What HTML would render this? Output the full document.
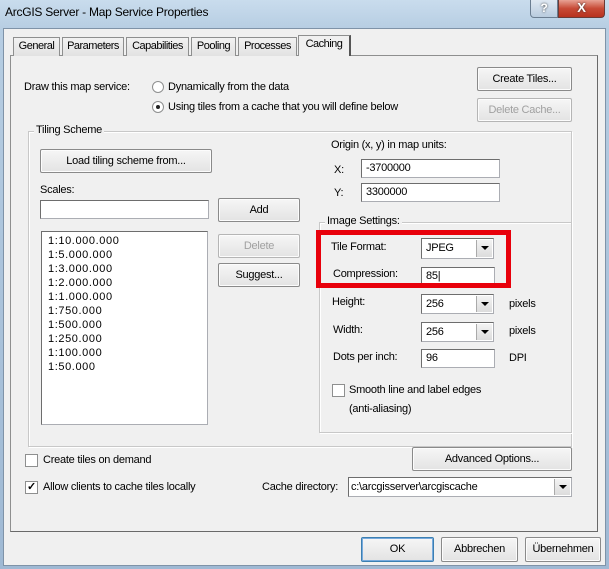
<!DOCTYPE html>
<html><head><meta charset="utf-8"><style>
*{box-sizing:border-box;margin:0;padding:0}
body{width:609px;height:569px;overflow:hidden;position:relative;font-family:"Liberation Sans",sans-serif;font-size:11px;letter-spacing:-0.25px;color:#000;background:linear-gradient(180deg,#c9dced 0,#b6cde2 30px,#9fb9d4 100%)}
.a{position:absolute;white-space:nowrap}
.t{position:absolute;white-space:nowrap;line-height:13px}
.btn{position:absolute;background:linear-gradient(#f6f6f6,#e3e3e3);border:1px solid #8a8a8a;border-radius:2px;text-align:center;box-shadow:inset 0 0 0 1px #fcfcfc}
.dis{color:#a0a0a0;border-color:#b5b5b5}
.inp{position:absolute;background:#fff;border:1px solid #abadb3;border-top-color:#6d6d6d;border-left-color:#6d6d6d;padding-left:4px}
.grp{position:absolute;border:1px solid #c8c8c8;box-shadow:1px 1px 0 #fff, inset 1px 1px 0 #fff}
.gl{position:absolute;background:#f0f0f0;padding:0 2px;top:-8px;left:5px;white-space:nowrap}
.cb{position:absolute;width:13px;height:13px;background:#fff;border:1px solid #8e8f8f}
.dd{position:absolute;right:1px;top:1px;bottom:1px;width:16px;background:linear-gradient(#f3f3f3,#dcdcdc);border-left:1px solid #aaa}
.dd:after{content:"";position:absolute;left:4px;top:6px;border:4px solid transparent;border-top:4px solid #000;border-bottom:0}
.tab{position:absolute;top:37px;height:19px;border:1px solid #8e8f8f;border-bottom:none;background:linear-gradient(#f2f2f2,#e2e2e2);text-align:center;line-height:17px;letter-spacing:-0.5px}
</style></head><body>
<div class="a" style="left:5px;top:5px;font-size:12px;color:#000">ArcGIS Server - Map Service Properties</div>
<div class="a" style="left:530px;top:0;width:28px;height:18px;border:1px solid #6b7d91;border-top:none;border-radius:0 0 0 4px;background:linear-gradient(#dfe8f2,#b9cbde);text-align:center;font-weight:bold;font-size:12px;color:#fff;text-shadow:0 0 2px #333;line-height:16px">?</div>
<div class="a" style="left:558px;top:0;width:47px;height:18px;border:1px solid #6b3a36;border-top:none;border-radius:0 0 4px 0;background:linear-gradient(#e8a294,#c74a36 50%,#b8321f);text-align:center;font-weight:bold;font-size:13px;color:#fff;text-shadow:0 0 2px #333;line-height:16px">X</div>
<div class="a" style="left:3px;top:28px;width:603px;height:538px;background:#f0f0f0;border:1px solid #7f93a8"></div>
<div class="a" style="left:10px;top:55px;width:588px;height:477px;background:#f0f0f0;border:1px solid #8e8f8f;border-right-color:#696969;border-bottom-color:#696969"></div>
<div class="tab" style="left:13px;width:47px">General</div>
<div class="tab" style="left:62px;width:62px">Parameters</div>
<div class="tab" style="left:126px;width:63px">Capabilities</div>
<div class="tab" style="left:191px;width:45px">Pooling</div>
<div class="tab" style="left:238px;width:59px">Processes</div>
<div class="tab" style="left:298px;top:35px;height:21px;width:53px;background:#f0f0f0;border-color:#8e8f8f;border-right:2px solid #555">Caching</div>

<div class="t" style="left:24px;top:81px">Draw this map service:</div>
<div class="a" style="left:152px;top:81px;width:12px;height:12px;border-radius:50%;border:1px solid #8e8f8f;background:#fff"></div>
<div class="t" style="left:168px;top:81px">Dynamically from the data</div>
<div class="a" style="left:152px;top:101px;width:12px;height:12px;border-radius:50%;border:1px solid #8e8f8f;background:#fff"><div style="position:absolute;left:3px;top:3px;width:4px;height:4px;border-radius:50%;background:#222"></div></div>
<div class="t" style="left:168px;top:101px">Using tiles from a cache that you will define below</div>
<div class="btn" style="left:477px;top:67px;width:95px;height:24px;line-height:22px">Create Tiles...</div>
<div class="btn dis" style="left:477px;top:98px;width:95px;height:24px;line-height:22px">Delete Cache...</div>

<div class="grp" style="left:28px;top:131px;width:544px;height:316px"><div class="gl">Tiling Scheme</div></div>
<div class="btn" style="left:40px;top:149px;width:172px;height:24px;line-height:22px">Load tiling scheme from...</div>
<div class="t" style="left:40px;top:184px">Scales:</div>
<div class="inp" style="left:40px;top:200px;width:169px;height:19px"></div>
<div class="btn" style="left:218px;top:198px;width:82px;height:24px;line-height:22px">Add</div>
<div class="btn dis" style="left:218px;top:234px;width:82px;height:24px;line-height:22px">Delete</div>
<div class="btn" style="left:218px;top:263px;width:82px;height:24px;line-height:22px">Suggest...</div>
<div class="inp" style="left:41px;top:231px;width:167px;height:194px;padding:2px 0 0 6px;line-height:14px;letter-spacing:0.6px">1:10.000.000<br>1:5.000.000<br>1:3.000.000<br>1:2.000.000<br>1:1.000.000<br>1:750.000<br>1:500.000<br>1:250.000<br>1:100.000<br>1:50.000</div>

<div class="t" style="left:331px;top:139px">Origin (x, y) in map units:</div>
<div class="t" style="left:334px;top:164px">X:</div>
<div class="inp" style="left:361px;top:159px;width:139px;height:19px;line-height:17px">-3700000</div>
<div class="t" style="left:334px;top:187px">Y:</div>
<div class="inp" style="left:361px;top:183px;width:139px;height:19px;line-height:17px">3300000</div>

<div class="grp" style="left:319px;top:222px;width:253px;height:211px"><div class="gl">Image Settings:</div></div>
<div class="t" style="left:331px;top:241px">Tile Format:</div>
<div class="inp" style="left:421px;top:238px;width:73px;height:21px;line-height:19px">JPEG<div class="dd"></div></div>
<div class="t" style="left:333px;top:268px">Compression:</div>
<div class="inp" style="left:421px;top:267px;width:74px;height:19px;line-height:17px">85|</div>
<div class="a" style="left:316px;top:230px;width:195px;height:58px;border:5px solid #e8000b"></div>
<div class="t" style="left:332px;top:296px">Height:</div>
<div class="inp" style="left:421px;top:294px;width:73px;height:20px;line-height:18px">256<div class="dd"></div></div>
<div class="t" style="left:509px;top:298px">pixels</div>
<div class="t" style="left:333px;top:324px">Width:</div>
<div class="inp" style="left:421px;top:322px;width:73px;height:20px;line-height:18px">256<div class="dd"></div></div>
<div class="t" style="left:509px;top:325px">pixels</div>
<div class="t" style="left:333px;top:351px">Dots per inch:</div>
<div class="inp" style="left:421px;top:349px;width:74px;height:19px;line-height:17px">96</div>
<div class="t" style="left:509px;top:352px">DPI</div>
<div class="cb" style="left:332px;top:384px"></div>
<div class="t" style="left:349px;top:384px">Smooth line and label edges</div>
<div class="t" style="left:349px;top:403px">(anti-aliasing)</div>

<div class="cb" style="left:25px;top:454px"></div>
<div class="t" style="left:43px;top:454px">Create tiles on demand</div>
<div class="btn" style="left:412px;top:447px;width:160px;height:24px;line-height:22px">Advanced Options...</div>
<div class="cb" style="left:25px;top:481px;font-size:11px;line-height:11px;text-align:center;font-weight:bold">✓</div>
<div class="t" style="left:43px;top:481px">Allow clients to cache tiles locally</div>
<div class="t" style="left:262px;top:481px">Cache directory:</div>
<div class="inp" style="left:348px;top:477px;width:224px;height:20px;line-height:18px;padding-left:2px">c:\arcgisserver\arcgiscache<div class="dd"></div></div>

<div class="btn" style="left:361px;top:537px;width:73px;height:25px;line-height:23px;border-color:#3c7fb1;box-shadow:inset 0 0 0 1px #7ad">OK</div>
<div class="btn" style="left:441px;top:537px;width:77px;height:25px;line-height:23px">Abbrechen</div>
<div class="btn" style="left:525px;top:537px;width:76px;height:25px;line-height:23px">Übernehmen</div>
</body></html>
